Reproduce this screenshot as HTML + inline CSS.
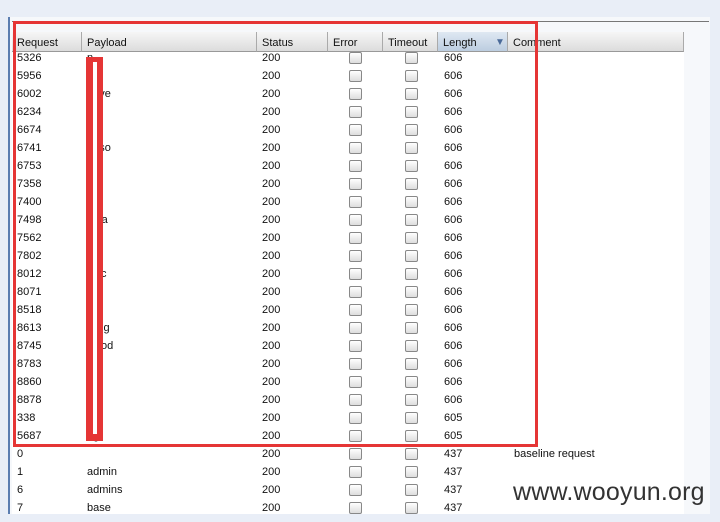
<!DOCTYPE html><html><head><style>
body{margin:0;width:720px;height:522px;background:#e9eef7;font-family:"Liberation Sans",sans-serif;font-size:11px;color:#111;position:relative;overflow:hidden}
.panel{position:absolute;left:10px;top:17px;width:700px;height:497px;background:#f6f8fb}
.tbl{position:absolute;left:12px;top:32px;width:672px;height:482px;background:#fff}
.lb{position:absolute;left:8px;top:17px;width:2px;height:497px;background:#5b7db0}
.tl{position:absolute;left:12px;top:21px;width:697px;height:1px;background:#777}
.hdr{position:absolute;top:32px;height:20px;border-right:1px solid #aaa;border-bottom:1px solid #999;background:linear-gradient(#f6f6f6,#dcdcdc);box-sizing:border-box;padding:5px 0 0 5px;font-size:11px}
.c{position:absolute;font-size:11px;line-height:12px}
.cb{position:absolute;width:11px;height:10px;border:1px solid #888;border-radius:2px;background:linear-gradient(#fff,#ddd)}
.red{position:absolute;border:3px solid #e53535}
</style></head><body>
<div class="panel"></div><div class="tbl"></div><div class="lb"></div><div class="tl"></div>
<div class="hdr" style="left:12px;width:70px">Request</div>
<div class="hdr" style="left:82px;width:175px">Payload</div>
<div class="hdr" style="left:257px;width:71px">Status</div>
<div class="hdr" style="left:328px;width:55px">Error</div>
<div class="hdr" style="left:383px;width:55px">Timeout</div>
<div class="hdr" style="left:438px;width:70px;background:linear-gradient(#dfe8f2,#bccde0)">Length<span style="position:absolute;left:57px;top:5px;color:#4a6a99;font-size:10px">▼</span></div>
<div class="hdr" style="left:508px;width:176px">Comment</div>
<div id="rows"></div>
<div class="red" style="left:13px;top:21px;width:519px;height:420px"></div>
<div style="position:absolute;left:86px;top:57px;width:17px;height:384px;background:#e53535"></div>
<div style="position:absolute;left:93px;top:62px;width:4px;height:372px;background:#fff"></div>
<div style="position:absolute;left:513px;top:478px;font-size:25px;color:#333;letter-spacing:0.2px">www.wooyun.org</div>
<script>
var d=[["5326","n","606"],["5956","nat","606"],["6002","nave","606"],["6234","nd","606"],["6674","npl","606"],["6741","naso","606"],["6753","na","606"],["7358","ola","606"],["7400","ois","606"],["7498","naia","606"],["7562","nai","606"],["7802","il","606"],["8012","nyic","606"],["8071","a","606"],["8518","nia","606"],["8613","wing","606"],["8745","wood","606"],["8783","ae","606"],["8860","ere","606"],["8878","nia","606"],["338","oo","605"],["5687","ng","605"],["0","","437","baseline request"],["1","admin","437"],["6","admins","437"],["7","base","437"]];
var h="";d.forEach(function(r,i){var y=52+18*i;
h+='<div class="c" style="left:17px;top:'+y+'px">'+r[0]+'</div><div class="c" style="left:87px;top:'+y+'px">'+r[1]+'</div><div class="c" style="left:262px;top:'+y+'px">200</div><div class="cb" style="left:349px;top:'+(y)+'px"></div><div class="cb" style="left:405px;top:'+(y)+'px"></div><div class="c" style="left:444px;top:'+y+'px">'+r[2]+'</div>'+(r[3]?'<div class="c" style="left:514px;top:'+y+'px">'+r[3]+'</div>':'');});
document.getElementById("rows").innerHTML=h;
</script>
</body></html>
